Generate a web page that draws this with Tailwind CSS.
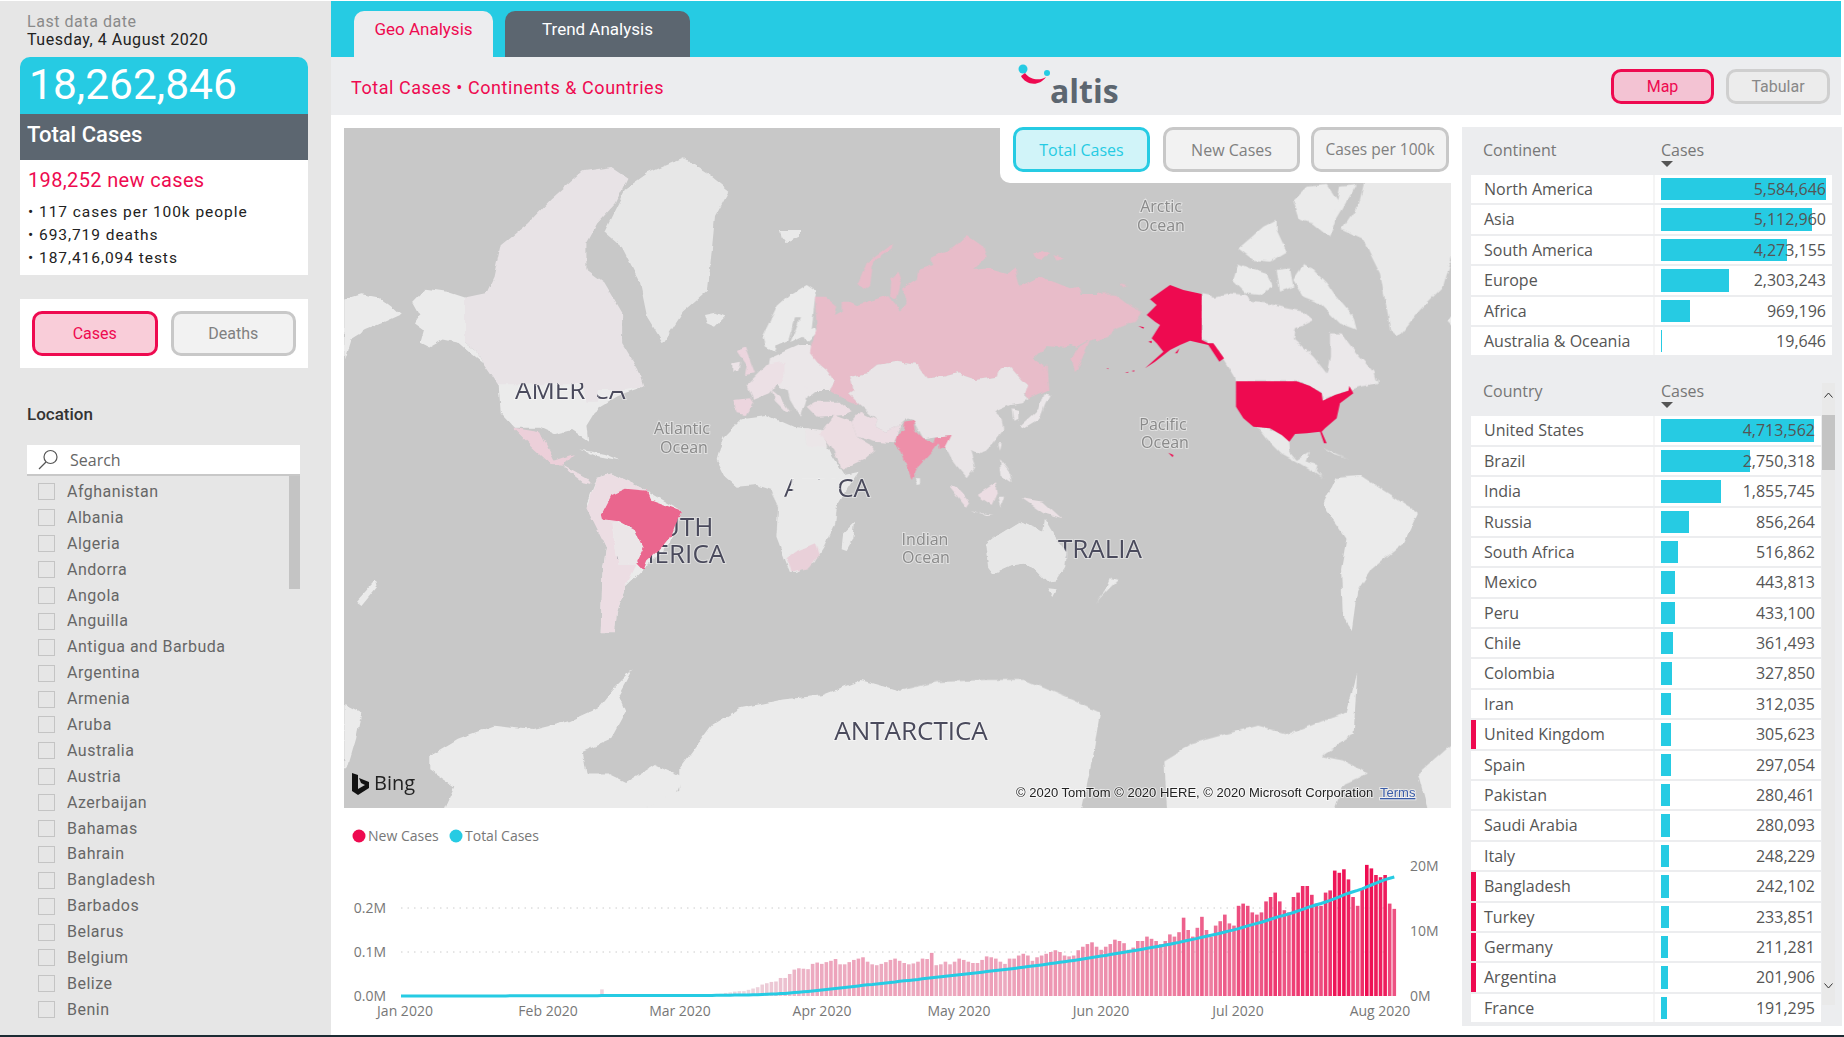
<!DOCTYPE html>
<html lang="en">
<head>
  <meta charset="UTF-8" />
  <title>COVID-19 Geo Analysis</title>
  <script src="https://cdn.jsdelivr.net/npm/@tailwindcss/browser@4"></script>
</head>
<body class="bg-white overflow-hidden">
<div class="w-[1844px] h-[1037px] flex flex-col font-['Roboto',sans-serif]">
  <div class="flex h-[1035px] pt-px">

    <!-- Sidebar -->
    <aside class="w-[331px] bg-[#e6e6e6] pl-[20px] pr-[23px] pt-[12px] shrink-0">
      <div class="px-[7px] text-[16px] leading-[18px] tracking-[.55px]">
        <p class="text-[#8a8a8a]">Last data date</p>
        <p class="text-[#222]">Tuesday, 4 August 2020</p>
      </div>
      <div class="mt-[8px] h-[57px] rounded-t-[10px] bg-[#26cbe3] pl-[9px] text-white text-[42.5px] leading-[55px]">18,262,846</div>
      <div class="h-[46px] bg-[#5c6670] pl-[7px] text-white text-[22px] leading-[42px] font-medium">Total Cases</div>
      <div class="h-[115px] bg-white pl-[8px] pt-[8px]">
        <p class="text-[20px] leading-[24px] tracking-[.35px] text-[#ee0a50]">198,252 new cases</p>
        <ul class="mt-[9px] text-[15.5px] leading-[23px] tracking-[.95px] text-[#222]">
          <li>• 117 cases per 100k people</li>
          <li>• 693,719 deaths</li>
          <li>• 187,416,094 tests</li>
        </ul>
      </div>
      <div class="mt-[24px] h-[69px] bg-white flex items-center gap-[13px] px-[12px]">
        <button class="w-[126px] h-[45px] rounded-[10px] border-[3px] border-[#ee0a50] bg-[#f9cdd9] text-[#ee0a50] text-[16px]">Cases</button>
        <button class="w-[126px] h-[45px] rounded-[10px] border-[3px] border-[#c8c8c8] bg-[#f2f2f2] text-[#808080] text-[16px]">Deaths</button>
      </div>
      <p class="mt-[36px] ml-[7px] text-[17px] leading-[20px] font-medium text-[#333]">Location</p>
      <div class="mt-[21px] ml-[7px] w-[273px]">
        <div class="h-[31px] bg-white border-b-2 border-[#c8c8c8] flex items-center pl-[11px] gap-[11px] font-['Open_Sans',sans-serif] text-[16px] text-[#666]">
          <svg width="21" height="21" viewBox="0 0 21 21" fill="none" stroke="#555" stroke-width="1.2"><circle cx="12.5" cy="8" r="6.5"/><path d="M8 13L1 20"/></svg>
          <span>Search</span>
        </div>
        <div class="relative">
          <ul id="locations" class="pt-[3px]"></ul>
          <div class="absolute right-0 top-0 w-[11px] h-[113px] bg-[#c4c4c4]"></div>
        </div>
      </div>
    </aside>

    <!-- Main -->
    <main class="w-[1513px] shrink-0">
      <div class="w-[1510px] h-[56px] bg-[#26cbe3] flex items-end pl-[23px] gap-[12px] text-[17px]">
        <div class="w-[139px] h-[46px] rounded-t-[10px] bg-[#ecedef] text-[#ee0a50] text-center leading-[36px]">Geo Analysis</div>
        <div class="w-[185px] h-[46px] rounded-t-[10px] bg-[#5c6670] text-white text-center leading-[36px]">Trend Analysis</div>
      </div>
      <div class="w-[1510px] h-[58px] bg-[#ecedef] relative flex items-center justify-between pl-[20px] pr-[11px]">
        <h1 class="mt-[2px] text-[18px] tracking-[.55px] font-normal text-[#ee0a50]">Total Cases • Continents &amp; Countries</h1>
        <div class="absolute left-[684px] top-0 w-[110px] h-[58px]">
          <svg class="absolute left-0 top-0" width="50" height="40" viewBox="0 0 50 40">
            <circle cx="8" cy="12" r="4.5" fill="#26cbe3"/>
            <circle cx="32" cy="16" r="3" fill="#26cbe3"/>
            <path d="M6 19C10 27 23 31 31 20C25 24 15 23 10 16Z" fill="#ee0a50"/>
          </svg>
          <span class="absolute left-[35px] top-[14px] font-['Open_Sans',sans-serif] text-[32px] leading-[40px] font-bold text-[#5c6670]">altis</span>
        </div>
        <div class="flex gap-[12px] text-[16px]">
          <button class="w-[103px] h-[35px] pt-px rounded-[10px] border-[3px] border-[#ee0a50] bg-[#f3c3d3] text-[#ee0a50]">Map</button>
          <button class="w-[104px] h-[35px] pt-px rounded-[10px] border-[3px] border-[#cfcfcf] bg-[#ececec] text-[#888]">Tabular</button>
        </div>
      </div>

      <div class="flex pt-[12px]">
        <div class="ml-[13px] w-[1107px]">
          <!-- Map -->
          <div class="relative mt-px h-[680px] bg-[#c8c8c8]">
            <svg class="block" width="1107" height="680" viewBox="344 128 1107 680" font-family="Open Sans">
              <defs>
                <filter id="coast" x="-2%" y="-2%" width="104%" height="104%" color-interpolation-filters="sRGB">
                  <feTurbulence type="fractalNoise" baseFrequency=".09" numOctaves="3" seed="4"/>
                  <feDisplacementMap in="SourceGraphic" scale="5" xChannelSelector="R" yChannelSelector="G"/>
                </filter>
              </defs>
              <!-- base land -->
              <g filter="url(#coast)">
                <g transform="translate(340 130) scale(.35714 .43478)" fill="#ebebeb">
                  <polygon points="12,390 60,378 110,385 150,410 170,425 130,440 70,460 30,480 12,530"/>
                  <polygon points="205,395 240,365 300,372 350,385 350,488 385,510 400,535 370,515 335,490 290,482 250,500 225,490 235,460 210,445 225,425"/>
                  <polygon points="442,560 720,560 850,590 780,610 720,640 690,680 695,715 650,690 600,700 560,685 490,685 450,650"/>
                  <polygon points="690,860 720,800 760,790 860,830 955,875 925,950 850,1010 800,1050 775,1110 770,1150 730,1155 735,1020 745,960"/>
                  <polygon fill="#e7e7e7" points="740,235 800,135 860,100 960,65 1030,100 1090,140 1050,200 1030,370 960,420 905,490 860,430 840,350 790,270"/>
                  <polygon points="670,735 740,745 785,760 720,750"/>
                  <polygon points="45,1085 100,1035 105,1050 60,1095"/>
                  <polygon points="12,1320 60,1340 45,1400 20,1470 12,1470"/>
                  <polygon points="250,1440 330,1400 430,1370 540,1380 640,1360 720,1330 760,1290 820,1240 780,1300 800,1340 760,1400 680,1430 690,1480 750,1480 800,1500 880,1460 960,1490 940,1530 745,1600 270,1600 320,1510 250,1470"/>
                  <polygon points="950,1470 1040,1370 1120,1330 1240,1310 1350,1300 1460,1265 1568,1290 1568,1600 760,1600 950,1520"/>
                </g>
                <g transform="translate(900 130) scale(.35714 .43478)" fill="#ebebeb">
                  <polygon points="545,1090 585,1055 610,1035 590,1030 575,1060"/>
                  <polygon points="0,1290 100,1270 240,1265 350,1265 480,1310 560,1340 540,1440 500,1600 0,1600"/>
                  <polygon points="740,1450 820,1410 1000,1370 1090,1390 1180,1360 1250,1340 1280,1250 1270,1390 1180,1440 1240,1450 1310,1480 1240,1505 1200,1600 750,1600"/>
                  <polygon points="1450,1480 1560,1400 1560,1600 1490,1600"/>
                  <polygon points="1185,860 1220,800 1290,795 1450,880 1410,950 1320,1010 1280,1060 1265,1150 1240,1120 1235,1010 1250,940 1190,870"/>
                </g>
                <g transform="translate(700 230) scale(.33333)" fill="#e9e9e9">
                  <polygon points="50,690 70,620 125,565 200,555 280,590 360,600 395,680 430,735 475,725 440,780 410,830 405,880 370,950 340,1000 290,1025 270,1025 230,920 235,830 215,780 170,765 110,770 75,740"/>
                  <polygon points="12,255 45,248 75,260 45,290 20,280"/>
                  <polygon points="240,0 300,0 300,20 260,40 245,20"/>
                  <polygon points="425,955 430,910 465,875 460,925 440,960"/>
                  <polygon points="857,945 895,915 960,875 990,890 1030,905 1035,870 1065,920 1100,970 1095,1010 1070,1050 1040,1055 1005,1020 980,1000 935,1005 880,1030 865,1010"/>
                  <polygon points="1045,1075 1070,1078 1060,1098"/>
                </g>
              </g>
              <!-- map labels sit between base land and the filled countries -->
              <g fill="#8a8a8a" font-size="16" text-anchor="middle" stroke="#fff" stroke-opacity=".45" stroke-width="2" paint-order="stroke">
                <text x="682" y="434">Atlantic</text><text x="684" y="453">Ocean</text>
                <text x="1161" y="212">Arctic</text><text x="1161" y="231">Ocean</text>
                <text x="1163" y="430">Pacific</text><text x="1165" y="448">Ocean</text>
                <text x="925" y="545">Indian</text><text x="926" y="563">Ocean</text>
              </g>
              <g fill="#4a4a5c" font-size="26" stroke="#fff" stroke-opacity=".4" stroke-width="2" paint-order="stroke">
                <text x="515" y="399">AMERICA</text>
                <text x="670" y="536" text-anchor="middle">SOUTH</text>
                <text x="670" y="563" text-anchor="middle">AMERICA</text>
                <text x="870" y="497" text-anchor="end">AFRICA</text>
                <text x="1142" y="558" text-anchor="end">AUSTRALIA</text>
                <text x="911" y="740" text-anchor="middle">ANTARCTICA</text>
              </g>
              <!-- filled countries -->
              <g filter="url(#coast)">
                <g transform="translate(340 130) scale(.35714 .43478)">
                  <polygon fill="#e8e3e6" points="350,385 410,375 430,340 450,265 525,215 590,160 680,95 760,85 805,110 770,170 720,215 690,260 690,320 740,350 790,420 790,490 835,550 850,590 800,598 725,598 722,625 690,625 680,585 442,585 400,535 385,510 350,488"/>
                  <polygon fill="#eccfd9" points="485,685 560,695 600,760 655,745 625,770 590,768 540,730"/>
                  <polygon fill="#ecdde3" points="625,770 690,800 705,815 680,810 640,785"/>
                  <polygon fill="#ecdde3" points="690,870 720,800 760,790 860,830 870,850 780,900 760,905 780,1000 830,1000 800,1050 775,1110 770,1155 730,1155 735,1020 745,960"/>
                  <polygon fill="#ebe6e8" points="760,900 825,920 850,960 830,1000 780,1000"/>
                  <polygon fill="#ea668e" points="735,880 760,840 800,825 860,830 870,850 955,875 930,930 900,960 860,990 850,1012 830,995 850,960 825,920 780,900 740,895"/>
                </g>
                <g transform="translate(700 230) scale(.33333)">
                  <polygon fill="#e9e9e9" points="275,745 420,745 410,830 405,880 370,950 340,1000 290,1025 270,1025 230,920 235,830 215,790 250,800 275,800"/>
                  <polygon fill="#ebe6e8" points="315,595 365,600 385,650 320,650"/>
                  <polygon fill="#e9d0d9" points="260,985 285,965 345,940 358,975 325,1015 275,1025"/>
                  <polygon fill="#e7e7e7" points="857,945 895,915 960,875 990,890 1030,905 1035,870 1065,920 1100,970 1095,1010 1070,1050 1040,1055 1005,1020 980,1000 935,1005 880,1030 865,1010"/>
                  <polygon fill="#ebebeb" points="187,320 230,230 270,195 320,165 350,185 345,205 335,300 345,295 350,310 320,335 310,320 270,340 300,265 285,265 265,330 230,345 225,365 195,350"/>
                  <polygon fill="#ebe7e9" points="210,385 300,345 330,345 355,400 380,420 405,455 390,480 350,480 330,495 300,505 280,490 240,470 200,440"/>
                  <polygon fill="#ece0e5" points="140,465 200,405 250,395 250,450 225,470 210,490 160,510"/>
                  <polygon fill="#ecd5de" points="100,510 150,505 160,520 140,555 110,550"/>
                  <polygon fill="#ece0e5" points="215,480 240,500 270,545 255,540 225,510"/>
                  <polygon fill="#ebe7e9" points="260,470 330,475 320,500 300,560 270,510"/>
                  <polygon fill="#ecd5de" points="110,360 135,350 165,430 135,435 140,405"/>
                  <polygon fill="#ece3e7" points="97,400 120,395 115,425 97,428"/>
                  <polygon fill="#e8bcc9" points="345,200 375,200 412,230 405,258 428,245 428,215 450,215 470,225 520,210 565,195 575,215 600,245 620,215 610,175 650,150 655,120 700,105 690,85 760,50 800,15 850,50 860,80 820,120 870,115 925,130 945,115 960,170 1020,140 1060,155 1110,175 1140,170 1145,195 1205,195 1205,320 1165,330 1130,350 1115,345 1090,350 1040,345 1000,385 1030,405 1040,480 985,505 975,490 985,465 965,450 930,410 900,415 890,440 830,450 770,430 730,440 680,445 650,405 590,395 530,405 500,430 450,440 460,480 445,490 480,525 430,505 390,480 405,455 380,420 355,400 330,370 335,340 350,300"/>
                  <polygon fill="#e8bcc9" points="475,160 500,100 580,40 575,55 520,95 510,165 490,180"/>
                  <polygon fill="#e8bcc9" points="570,200 575,145 595,125 605,150 590,210"/>
                  <polygon fill="#e8bcc9" points="1000,70 1030,60 1050,70 1025,90 1005,85"/>
                  <polygon fill="#e8bcc9" points="1060,75 1085,85 1070,92"/>
                  <polygon fill="#e8bcc9" points="1115,385 1130,355 1170,330 1140,400 1125,430"/>
                  <polygon fill="#e8bcc9" points="1030,410 1040,410 1045,480 1035,480"/>
                  <polygon fill="#e9e5e7" points="450,440 500,430 530,405 590,395 650,405 680,445 730,440 770,430 830,450 890,440 900,415 930,410 965,450 985,465 975,495 985,505 965,520 930,525 885,545 905,565 910,600 880,640 860,660 830,670 810,660 825,710 800,745 770,710 755,690 740,660 725,635 755,615 700,620 670,625 640,570 620,565 590,590 560,605 530,590 530,570 480,525 445,490 460,480"/>
                  <polygon fill="#ebe7e9" points="935,535 955,540 955,570 940,575"/>
                  <polygon fill="#ebe7e9" points="960,590 1015,540 1030,490 1050,495 1035,525 1020,565 970,595"/>
                  <polygon fill="#ecdde3" points="455,575 480,545 530,570 530,590 560,605 590,590 610,575 590,620 580,640 520,635 470,620"/>
                  <polygon fill="#ecdde3" points="320,530 345,515 420,515 460,545 440,555 350,560"/>
                  <polygon fill="#ecdde2" points="360,610 400,555 455,575 470,620 520,650 525,660 490,690 425,720 395,650"/>
                  <polygon fill="#ee8fa9" points="583,645 590,620 612,600 615,575 640,570 645,600 670,625 700,640 705,620 755,615 735,655 720,660 715,640 700,660 655,710 635,750 610,690 600,660"/>
                  <polygon fill="#ebebeb" points="645,745 660,745 660,760 650,762"/>
                  <polygon fill="#ecdde3" points="745,765 770,770 810,820 800,835"/>
                  <polygon fill="#ecdde3" points="830,795 885,760 890,790 875,825"/>
                  <polygon fill="#ebe7e9" points="810,840 860,855 880,855 820,845"/>
                  <polygon fill="#ebe7e9" points="895,800 915,800 905,830"/>
                  <polygon fill="#ebe7e9" points="900,690 930,730 935,760 905,740"/>
                  <polygon fill="#ebe1e5" points="965,805 1030,815 1085,865 1030,850"/>
                  <polygon fill="#ebe7e9" points="895,640 905,640 900,660"/>
                </g>
                <g transform="translate(1100 180) scale(.33333)">
                  <polygon fill="#e8bcc9" points="-10,340 40,340 85,375 125,395 105,425 65,440 45,450 25,470 -10,485"/>
                  <polygon fill="#e8bcc9" points="60,310 80,315 70,322"/>
                  <polygon fill="#ebe8ea" points="305,342 345,350 385,340 440,345 450,365 500,370 560,385 610,395 640,420 590,445 585,480 640,530 680,580 690,530 690,460 725,460 770,520 820,575 830,610 780,620 745,632 705,645 668,662 665,640 630,618 590,604 408,604 405,590 372,535 340,490 325,490 305,480"/>
                  <polygon fill="#ebebeb" points="400,300 415,250 450,265 500,280 520,320 480,345 440,340"/>
                  <polygon fill="#ebebeb" points="415,205 450,175 490,140 530,120 530,150 560,215 510,245 460,240"/>
                  <polygon fill="#ebebeb" points="580,300 610,255 640,270 680,310 700,340 760,410 770,450 720,430 660,370 610,350"/>
                  <polygon fill="#ebebeb" points="530,270 570,265 580,320 540,335"/>
                  <polygon fill="#ebebeb" points="580,60 620,20 680,15 720,75 690,170 640,130 600,120"/>
                  <polygon fill="#ebebeb" points="720,20 770,15 700,130"/>
                  <polygon fill="#e9e9e9" points="725,150 780,70 800,-10 1070,-10 1070,180 1030,320 960,390 895,470 870,450 860,380 840,280 790,180"/>
                  <polygon fill="#ebebeb" points="820,600 835,600 835,612"/>
                  <polygon fill="#ebebeb" points="1040,420 1060,405 1060,440"/>
                  <polygon fill="#e9e9e9" points="460,740 510,745 545,765 568,785 570,815 590,840 630,815 620,845 655,855 650,875 670,895 640,875 590,845 545,820 500,775 480,750"/>
                  <polygon fill="#ebebeb" points="665,800 720,825 745,835 700,820"/>
                </g>
              </g>
              <!-- United States keeps crisp borders -->
              <g transform="translate(1100 180) scale(.33333)" fill="#ee0a50">
                <polygon points="140,405 170,375 150,358 175,340 210,315 250,330 305,342 305,480 325,490 340,490 372,535 358,545 325,495 270,482 240,495 210,510 165,545 135,565 190,515 170,490 155,475 180,435 165,425"/>
                <polygon points="225,520 238,505 232,520"/>
                <polygon points="115,438 132,442 130,446"/>
                <polygon points="75,578 85,575 84,578"/>
                <polygon points="95,573 103,571 102,575"/>
                <polygon points="20,565 25,565 24,568"/>
                <polygon points="145,485 155,482 155,490"/>
                <polygon points="205,818 220,825 218,832"/>
                <polygon points="408,604 590,604 630,618 665,640 668,662 705,645 745,632 748,618 760,640 720,670 710,715 675,745 665,755 680,790 672,790 660,755 620,760 585,762 568,785 545,765 510,745 460,740 430,715 408,680"/>
              </g>
              <g font-family="Liberation Sans" font-size="13" stroke="#fff" stroke-opacity=".6" stroke-width="2" paint-order="stroke">
                <text x="1016" y="797" fill="#222">© 2020 TomTom © 2020 HERE, © 2020 Microsoft Corporation</text>
                <text x="1380" y="797" fill="#3a5ca8" text-decoration="underline">Terms</text>
              </g>
              <path d="M352 773l6 2v14l7-4-4-2-2-5 10 4v6l-11 7-6-4z" fill="#111"/>
              <text x="374" y="790" font-size="20" fill="#222">Bing</text>
            </svg>
            <div class="absolute left-[656px] -top-px w-[460px] h-[56px] rounded-bl-[10px] bg-white flex pl-[13px] text-[16px] font-['Open_Sans',sans-serif]">
              <button class="w-[137px] h-[45px] rounded-[10px] border-[3px] border-[#26cbe3] bg-[#d1f4f9] text-[#26cbe3]">Total Cases</button>
              <button class="ml-[13px] w-[137px] h-[45px] rounded-[10px] border-[3px] border-[#c8c8c8] bg-[#f2f2f2] text-[#808080]">New Cases</button>
              <button class="ml-[11px] w-[138px] h-[45px] rounded-[10px] border-[3px] border-[#c8c8c8] bg-[#f2f2f2] text-[#808080] text-[15.5px]">Cases per 100k</button>
            </div>
          </div>
          <!-- Chart -->
          <svg id="chart" class="block" width="1107" height="227" viewBox="344 808 1107 227" font-family="Open Sans" font-size="14" fill="#777">
            <circle cx="359" cy="836" r="6.5" fill="#ee0a50"/>
            <text x="368" y="841">New Cases</text>
            <circle cx="456" cy="836" r="6.5" fill="#26cbe3"/>
            <text x="465" y="841">Total Cases</text>
            <path d="M401 908H1395M401 952H1395" stroke="#ccc" stroke-dasharray="1.5 5"/>
            <text x="386" y="913" text-anchor="end">0.2M</text>
            <text x="386" y="957" text-anchor="end">0.1M</text>
            <text x="386" y="1001" text-anchor="end">0.0M</text>
            <text x="1410" y="871">20M</text>
            <text x="1410" y="936">10M</text>
            <text x="1410" y="1001">0M</text>
            <g id="bars"></g>
            <path id="line" fill="none" stroke="#26cbe3" stroke-width="3"/>
            <g text-anchor="middle">
              <text x="405" y="1016">Jan 2020</text>
              <text x="548" y="1016">Feb 2020</text>
              <text x="680" y="1016">Mar 2020</text>
              <text x="822" y="1016">Apr 2020</text>
              <text x="959" y="1016">May 2020</text>
              <text x="1101" y="1016">Jun 2020</text>
              <text x="1238" y="1016">Jul 2020</text>
              <text x="1380" y="1016">Aug 2020</text>
            </g>
          </svg>
        </div>

        <!-- Right tables -->
        <div class="relative ml-[11px] w-[380px] h-[899px] bg-[#ecedef] pl-[9px] font-['Open_Sans',sans-serif] text-[16px] text-[#555]">
          <div class="flex h-[48px] pt-[11px] leading-[24px] text-[#777]">
            <span class="w-[190px] pl-[12px]">Continent</span>
            <div><span>Cases</span><div class="w-0 h-0 border-x-[6px] border-x-transparent border-t-[6px] border-t-[#555] -mt-px"></div></div>
          </div>
          <div id="continents" class="w-[361px] flex flex-col gap-[2px]"></div>
          <div class="flex h-[48px] mt-[13px] pt-[11px] leading-[24px] text-[#777]">
            <span class="w-[190px] pl-[12px]">Country</span>
            <div><span>Cases</span><div class="w-0 h-0 border-x-[6px] border-x-transparent border-t-[6px] border-t-[#555] -mt-px"></div></div>
          </div>
          <div id="countries" class="w-[350px] flex flex-col gap-[2px]"></div>
          <!-- table scrollbar -->
          <div class="absolute left-[360px] top-[256px] w-[13px] h-[622px] bg-[#e9e9e9]">
            <svg class="absolute left-[1px] top-[8px]" width="11" height="8" viewBox="0 0 11 8" fill="none" stroke="#333"><path d="M1.5 6.5L5.5 2l4 4.5"/></svg>
            <div class="absolute left-0 top-[32px] w-[13px] h-[55px] bg-[#c4c4c4]"></div>
            <svg class="absolute left-[1px] bottom-[15px]" width="11" height="8" viewBox="0 0 11 8" fill="none" stroke="#333"><path d="M1.5 1.5L5.5 6l4-4.5"/></svg>
          </div>
        </div>
      </div>
    </main>
  </div>
  <div class="h-[2px] bg-[#1c2b33]"></div>
</div>

<script>
  const locations = ['Afghanistan','Albania','Algeria','Andorra','Angola','Anguilla','Antigua and Barbuda','Argentina','Armenia','Aruba','Australia','Austria','Azerbaijan','Bahamas','Bahrain','Bangladesh','Barbados','Belarus','Belgium','Belize','Benin'];
  document.getElementById('locations').innerHTML = locations.map(name => `
    <li class="h-[25.9px] flex items-center pl-[11px] gap-[12px] text-[16px] tracking-[.5px] text-[#666]">
      <span class="w-[17px] h-[17px] border border-[#c4c4c4]"></span>${name}
    </li>`).join('');

  const continents = [['North America',5584646],['Asia',5112960],['South America',4273155],['Europe',2303243],['Africa',969196],['Australia & Oceania',19646]];
  const countries = [['United States',4713562],['Brazil',2750318],['India',1855745],['Russia',856264],['South Africa',516862],['Mexico',443813],['Peru',433100],['Chile',361493],['Colombia',327850],['Iran',312035],['United Kingdom',305623,1],['Spain',297054],['Pakistan',280461],['Saudi Arabia',280093],['Italy',248229],['Bangladesh',242102,1],['Turkey',233851,1],['Germany',211281,1],['Argentina',201906,1],['France',191295]];

  // one table row, bar scaled to the largest value in its table
  function row([name, value, marked], scale) {
    const mark = marked ? '<span class="absolute left-0 top-0 bottom-0 w-[5px] bg-[#ee0a50]"></span>' : '';
    const bar = Math.max(value / scale, 1);
    return `<div class="relative flex h-[28.4px] bg-white leading-[28px]">
      ${mark}
      <div class="w-[184px] pl-[13px] border-r-2 border-[#f5f5f5]">${name.replace('&', '&amp;')}</div>
      <div class="relative flex-1 text-right pr-[6px]">
        <div class="absolute left-[6px] top-[3px] bottom-[3px] bg-[#26cbe3]" style="width:${bar}px"></div>
        <span class="relative">${value.toLocaleString('en-US')}</span>
      </div>
    </div>`;
  }
  document.getElementById('continents').innerHTML = continents.map(r => row(r, 5584646 / 165)).join('');
  document.getElementById('countries').innerHTML = countries.map(r => row(r, 4713562 / 153)).join('');

  // daily new cases in thousands, Jan 1 to Aug 4
  const early = Array(60).fill(1);
  early[43] = 15;
  const daily = early.concat(
    [2,2,3,3,3,4,4,4,4,5,7,8,10,11,11,14,17,20,26,29,32,33,41,41,50,60,63,62,61,73,76],
    [73,77,80,84,72,72,77,82,85,88,78,72,70,73,77,82,85,80,75,72,74,78,85,84,98,70,72,78,72,78],
    [85,82,78,75,75,82,90,88,85,78,73,85,85,92,96,92,80,88,92,96,100,104,100,92,90,92,104,112,118,122,112],
    [105,112,118,128,125,120,105,110,125,125,135,130,125,118,125,140,135,145,178,150,135,155,180,150,135,160,170,185,165,160],
    [205,210,205,190,185,190,215,225,235,215,195,190,225,235,250,250,230,210,205,235,240,285,280,288,265,225,205,245,298,290,275],
    [270,275,210,198]
  );
  const svgNS = 'http://www.w3.org/2000/svg';
  const bars = document.getElementById('bars');
  const baseY = 996, dayW = 4.58;
  const final = daily.reduce((a, b) => a + b, 0);
  let sum = 0, d = 'M401 996';
  daily.forEach((v, i) => {
    const x = 405 + dayW * i;
    const h = v * 0.44;
    const t = Math.min(v / 300, 1);
    const rect = document.createElementNS(svgNS, 'rect');
    rect.setAttribute('x', x - 1.8);
    rect.setAttribute('y', baseY - h);
    rect.setAttribute('width', 3.6);
    rect.setAttribute('height', h);
    rect.setAttribute('fill', `rgb(${236 + 2 * t},${222 - 212 * t},${228 - 148 * t})`);
    bars.appendChild(rect);
    sum += v;
    d += ` L${x.toFixed(1)} ${(baseY - 119 * sum / final).toFixed(1)}`;
  });
  document.getElementById('line').setAttribute('d', d);
</script>
</body>
</html>
